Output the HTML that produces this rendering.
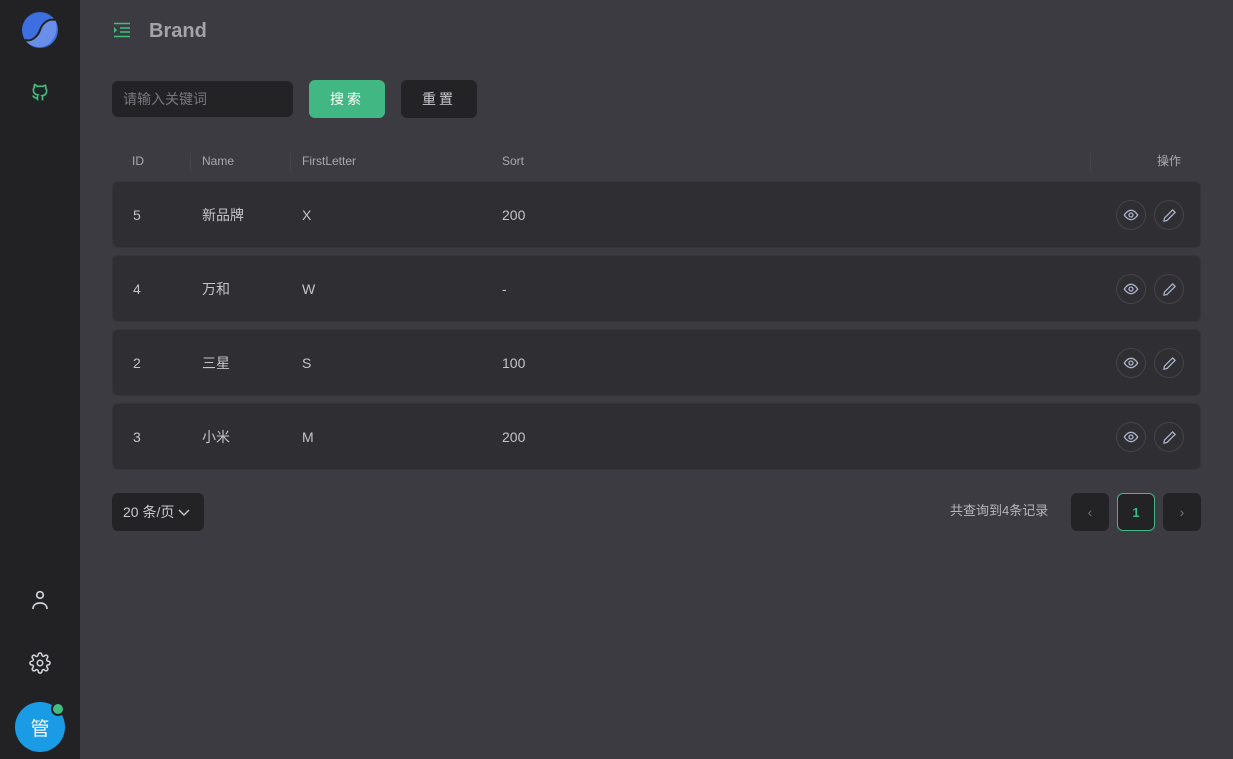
<!DOCTYPE html><html><head><meta charset="utf-8"><style>
*{box-sizing:border-box;margin:0;padding:0}
body{width:1233px;height:759px;overflow:hidden;background:#3c3b41;font-family:"Liberation Sans","Noto Sans CJK SC",sans-serif;color:#c9c9cf;position:relative}
.side{position:absolute;left:0;top:0;width:80px;height:759px;background:#222225}
.abs{position:absolute}
.row{position:absolute;left:112px;width:1089px;height:67px;background:#2f2e33;border:1px solid #36353b;border-radius:6px;font-size:14px;color:#c4c4ca}
.row span{position:absolute;top:25px;line-height:16px;height:16px}
.cb{position:absolute;top:18px;width:30px;height:30px;border:1px solid #45444b;border-radius:50%;display:flex;align-items:center;justify-content:center}
.hd{position:absolute;top:154px;font-size:12px;color:#a9a9af;line-height:14px}
.pg{position:absolute;top:493px;width:38px;height:38px;border-radius:6px;background:#232326;display:flex;align-items:center;justify-content:center;font-size:14px;color:#777}
</style></head><body>
<div class="side">
<svg class="abs" style="left:22px;top:12px" width="36" height="36" viewBox="0 0 36 36"><circle cx="18" cy="18" r="18" fill="#3d6fe0"/><path d="M33 8 C26 6 20 12 18 18 C16 24 10 30 3 28 C8 35 20 38 28 31 C35 24 36 14 33 8Z" fill="#6a8fe8"/><path d="M33 8 C26 6 20 12 18 18 C16 24 10 30 3 28" stroke="#222" stroke-width="2" fill="none"/></svg>
<svg class="abs" style="left:30px;top:82px" width="20" height="20" viewBox="0 0 24 24" fill="none" stroke="#3fbf7f" stroke-width="2"><path d="M9 19c-4 1.5-4-2-6-2.5M15 22v-3.5c0-1 .1-1.4-.5-2 2.8-.3 5.5-1.4 5.5-6a4.6 4.6 0 0 0-1.3-3.2 4.2 4.2 0 0 0-.1-3.2s-1.1-.3-3.5 1.300a12 12 0 0 0-6.2 0C6.5 2.8 5.4 3.1 5.4 3.1a4.2 4.2 0 0 0-.1 3.2A4.6 4.6 0 0 0 4 9.5c0 4.6 2.7 5.7 5.5 6-.6.6-.6 1.2-.5 2V22"/></svg>
<svg class="abs" style="left:30px;top:589px" width="20" height="22" viewBox="0 0 20 22" fill="none" stroke="#cfd3da" stroke-width="1.7"><circle cx="10" cy="6" r="3.3"/><path d="M3 20c0-4 3-6 7-6s7 2 7 6"/></svg>
<svg class="abs" style="left:29px;top:652px" width="22" height="22" viewBox="0 0 24 24" fill="none" stroke="#cfd3da" stroke-width="1.7"><circle cx="12" cy="12" r="3"/><path d="M19.4 15a1.7 1.7 0 0 0 .3 1.8l.1.1a2 2 0 1 1-2.8 2.8l-.1-.1a1.7 1.7 0 0 0-1.8-.3 1.7 1.7 0 0 0-1 1.5V21a2 2 0 1 1-4 0v-.1a1.7 1.7 0 0 0-1.1-1.5 1.7 1.7 0 0 0-1.8.3l-.1.1a2 2 0 1 1-2.8-2.8l.1-.1a1.7 1.7 0 0 0 .3-1.8 1.7 1.7 0 0 0-1.5-1H3a2 2 0 1 1 0-4h.1a1.7 1.7 0 0 0 1.5-1.1 1.7 1.7 0 0 0-.3-1.8l-.1-.1a2 2 0 1 1 2.8-2.8l.1.1a1.7 1.7 0 0 0 1.8.3H9a1.7 1.7 0 0 0 1-1.5V3a2 2 0 1 1 4 0v.1a1.7 1.7 0 0 0 1 1.5 1.7 1.7 0 0 0 1.8-.3l.1-.1a2 2 0 1 1 2.8 2.8l-.1.1a1.7 1.7 0 0 0-.3 1.8V9a1.7 1.7 0 0 0 1.5 1H21a2 2 0 1 1 0 4h-.1a1.7 1.7 0 0 0-1.5 1z"/></svg>
<div class="abs" style="left:15px;top:702px;width:50px;height:50px;border-radius:50%;background:#1a9be6;color:#fff;font-size:19px;display:flex;align-items:center;justify-content:center">管</div>
<div class="abs" style="left:51px;top:702px;width:14px;height:14px;border-radius:50%;background:#3fbf7f;border:2px solid #222225"></div>
</div>
<svg class="abs" style="left:113px;top:22px" width="18" height="16" viewBox="0 0 18 16" fill="none" stroke="#3fbf7f" stroke-width="1.6"><path d="M1 1.5h16M7 6h10M7 10h10M1 14.5h16"/><path d="M1 5l3 3-3 3z" fill="#3fbf7f" stroke="none"/></svg>
<div class="abs" style="left:149px;top:20px;font-size:20px;font-weight:bold;color:#a3a3a8;line-height:22px">Brand</div>
<div class="abs" style="left:112px;top:81px;width:181px;height:36px;background:#232326;border-radius:6px;font-size:14px;color:#78787e;padding:0 11px;line-height:36px">请输入关键词</div>
<div class="abs" style="left:309px;top:80px;width:76px;height:38px;background:#41b883;border-radius:6px;font-size:14px;color:#fff;text-align:center;line-height:38px;letter-spacing:3px">搜索</div>
<div class="abs" style="left:401px;top:80px;width:76px;height:38px;background:#232326;border-radius:6px;font-size:14px;color:#c9c9cf;text-align:center;line-height:38px;letter-spacing:3px">重置</div>
<div class="hd" style="left:132px">ID</div><div class="hd" style="left:202px">Name</div><div class="hd" style="left:302px">FirstLetter</div><div class="hd" style="left:502px">Sort</div><div class="hd" style="left:1157px">操作</div>
<div class="abs" style="left:190px;top:153px;width:1px;height:18px;background:#45444a"></div>
<div class="abs" style="left:290px;top:153px;width:1px;height:18px;background:#45444a"></div>
<div class="abs" style="left:1090px;top:153px;width:1px;height:18px;background:#45444a"></div>
<div class="row" style="top:181px"><span style="left:20px">5</span><span style="left:89px">新品牌</span><span style="left:189px">X</span><span style="left:389px">200</span><div class="cb" style="left:1003px">E</div><div class="cb" style="left:1041px">P</div></div>
<div class="row" style="top:255px"><span style="left:20px">4</span><span style="left:89px">万和</span><span style="left:189px">W</span><span style="left:389px">-</span><div class="cb" style="left:1003px">E</div><div class="cb" style="left:1041px">P</div></div>
<div class="row" style="top:329px"><span style="left:20px">2</span><span style="left:89px">三星</span><span style="left:189px">S</span><span style="left:389px">100</span><div class="cb" style="left:1003px">E</div><div class="cb" style="left:1041px">P</div></div>
<div class="row" style="top:403px"><span style="left:20px">3</span><span style="left:89px">小米</span><span style="left:189px">M</span><span style="left:389px">200</span><div class="cb" style="left:1003px">E</div><div class="cb" style="left:1041px">P</div></div>
<div class="abs" style="left:112px;top:493px;width:92px;height:38px;background:#232326;border-radius:6px;font-size:14px;color:#c9c9cf;padding:0 11px;line-height:38px">20 条/页 <svg width="12" height="8" viewBox="0 0 12 8" fill="none" stroke="#c9c9cf" stroke-width="1.4"><path d="M1 1l5 5 5-5"/></svg></div>
<div class="abs" style="left:950px;top:503px;font-size:13px;color:#b5b5bb;line-height:16px">共查询到4条记录</div>
<div class="pg" style="left:1071px">&lsaquo;</div>
<div class="pg" style="left:1117px;border:1px solid #41b883;color:#41b883;font-weight:bold;font-size:13px">1</div>
<div class="pg" style="left:1163px">&rsaquo;</div>
<script>
document.querySelectorAll('.cb').forEach(function(e){e.innerHTML=e.textContent=='E'?'<svg width="16" height="16" viewBox="0 0 24 24" fill="none" stroke="#a9b3c8" stroke-width="2"><path d="M2 12s4-7 10-7 10 7 10 7-4 7-10 7S2 12 2 12z"/><circle cx="12" cy="12" r="3"/></svg>':'<svg width="15" height="15" viewBox="0 0 24 24" fill="none" stroke="#a9b3c8" stroke-width="2"><path d="M17 3l4 4L8 20l-5 1 1-5z"/></svg>';});
</script>
</body></html>
